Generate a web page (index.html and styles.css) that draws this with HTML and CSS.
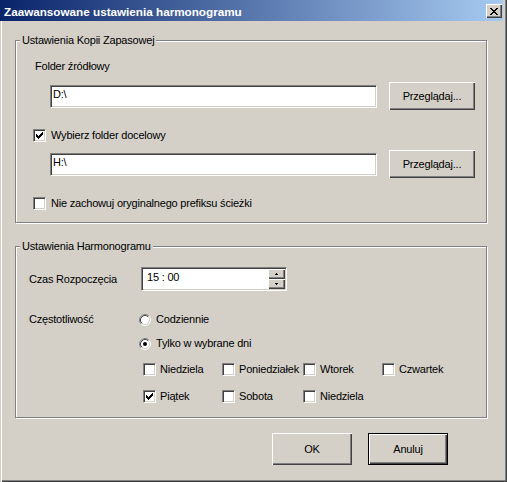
FILE: index.html
```html
<!DOCTYPE html>
<html lang="pl">
<head>
<meta charset="utf-8">
<title>Zaawansowane ustawienia harmonogramu</title>
<link rel="stylesheet" href="styles.css">
</head>
<body>
<div class="window">
  <div class="titlebar">
    <span class="title">Zaawansowane ustawienia harmonogramu</span>
    <span class="close-btn"><svg width="8" height="7" viewBox="0 0 8 7"><path d="M0 0h2v1H0z M6 0h2v1H6z M1 1h2v1H1z M5 1h2v1H5z M2 2h4v1H2z M3 3h2v1H3z M2 4h4v1H2z M1 5h2v1H1z M5 5h2v1H5z M0 6h2v1H0z M6 6h2v1H6z" fill="#000"/></svg></span>
  </div>
  <div class="content">
    <div class="group g1">
      <div class="group-title">Ustawienia Kopii Zapasowej</div>
      <div class="label-row">Folder źródłowy</div>
      <div class="field-row">
        <div class="textbox">D:\</div>
        <div class="btn browse">Przeglądaj...</div>
      </div>
      <div class="check-row">
        <span class="checkbox"><svg width="7" height="7" viewBox="0 0 7 7"><path d="M0 2h1v3H0z M1 3h1v3H1z M2 4h1v3H2z M3 3h1v3H3z M4 2h1v3H4z M5 1h1v3H5z M6 0h1v3H6z" fill="#000"/></svg></span>
        <span class="check-label">Wybierz folder docelowy</span>
      </div>
      <div class="field-row second">
        <div class="textbox">H:\</div>
        <div class="btn browse">Przeglądaj...</div>
      </div>
      <div class="check-row">
        <span class="checkbox"></span>
        <span class="check-label">Nie zachowuj oryginalnego prefiksu ścieżki</span>
      </div>
    </div>

    <div class="group g2">
      <div class="group-title">Ustawienia Harmonogramu</div>
      <div class="sched-row">
        <span class="field-label">Czas Rozpoczęcia</span>
        <div class="spinner">
          <span class="spin-text">15 : 00</span>
          <span class="spin-btns">
            <span class="spin-btn"><svg width="3" height="2" viewBox="0 0 3 2"><path d="M1 0h1v1H1z M0 1h3v1H0z" fill="#000"/></svg></span>
            <span class="spin-btn"><svg width="3" height="2" viewBox="0 0 3 2"><path d="M0 0h3v1H0z M1 1h1v1H1z" fill="#000"/></svg></span>
          </span>
        </div>
      </div>
      <div class="freq">
        <span class="field-label">Częstotliwość</span>
        <div class="options">
          <div class="radio-row">
            <svg class="radio" width="12" height="12" viewBox="0 0 12 12"><circle cx="6" cy="6" r="5" fill="#fff"/><path d="M2.11 9.89A5.5 5.5 0 0 1 9.89 2.11" fill="none" stroke="#808080"/><path d="M9.89 2.11A5.5 5.5 0 0 1 2.11 9.89" fill="none" stroke="#fff"/><path d="M2.82 9.18A4.5 4.5 0 0 1 9.18 2.82" fill="none" stroke="#404040"/><path d="M9.18 2.82A4.5 4.5 0 0 1 2.82 9.18" fill="none" stroke="#d4d0c8"/></svg>
            <span class="radio-label">Codziennie</span>
          </div>
          <div class="radio-row r2">
            <svg class="radio" width="12" height="12" viewBox="0 0 12 12"><circle cx="6" cy="6" r="5" fill="#fff"/><path d="M2.11 9.89A5.5 5.5 0 0 1 9.89 2.11" fill="none" stroke="#808080"/><path d="M9.89 2.11A5.5 5.5 0 0 1 2.11 9.89" fill="none" stroke="#fff"/><path d="M2.82 9.18A4.5 4.5 0 0 1 9.18 2.82" fill="none" stroke="#404040"/><path d="M9.18 2.82A4.5 4.5 0 0 1 2.82 9.18" fill="none" stroke="#d4d0c8"/><circle cx="6" cy="6" r="2" fill="#000"/></svg>
            <span class="radio-label">Tylko w wybrane dni</span>
          </div>
          <div class="days">
            <div class="day"><span class="checkbox"></span><span class="day-label">Niedziela</span></div>
            <div class="day"><span class="checkbox"></span><span class="day-label">Poniedziałek</span></div>
            <div class="day"><span class="checkbox"></span><span class="day-label">Wtorek</span></div>
            <div class="day"><span class="checkbox"></span><span class="day-label">Czwartek</span></div>
            <div class="day"><span class="checkbox"><svg width="7" height="7" viewBox="0 0 7 7"><path d="M0 2h1v3H0z M1 3h1v3H1z M2 4h1v3H2z M3 3h1v3H3z M4 2h1v3H4z M5 1h1v3H5z M6 0h1v3H6z" fill="#000"/></svg></span><span class="day-label">Piątek</span></div>
            <div class="day"><span class="checkbox"></span><span class="day-label">Sobota</span></div>
            <div class="day"><span class="checkbox"></span><span class="day-label">Niedziela</span></div>
          </div>
        </div>
      </div>
    </div>

    <div class="buttons">
      <div class="btn dlg">OK</div>
      <div class="btn dlg default">Anuluj</div>
    </div>
  </div>
</div>
</body>
</html>
```

FILE: styles.css
```css
* {
  box-sizing: border-box;
}

html,
body {
  margin: 0;
  padding: 0;
}

body {
  width: 507px;
  height: 482px;
  overflow: hidden;
  background: #d4d0c8;
  font-family: "Liberation Sans", Arial, sans-serif;
  font-size: 11px;
  letter-spacing: -0.2px;
  color: #000;
}

.window {
  width: 507px;
  height: 482px;
  background: #d4d0c8;
  box-shadow: inset 1px 0 0 #d4d0c8, inset 2px 0 0 #fff, inset -1px -1px 0 #404040, inset -2px -2px 0 #808080;
  display: flex;
  flex-direction: column;
}

/* Title bar */
.titlebar {
  width: 503px;
  height: 21px;
  flex: none;
  background: linear-gradient(to right, #0a246a, #a6caf0);
  display: flex;
  align-items: flex-start;
  justify-content: space-between;
  padding: 0 1px 0 4px;
}

.title {
  color: #fff;
  font-weight: bold;
  font-size: 11.7px;
  letter-spacing: 0;
  line-height: 18px;
  padding-top: 3px;
  white-space: nowrap;
}

.close-btn {
  margin-top: 4px;
  width: 16px;
  height: 14px;
  background: #d4d0c8;
  box-shadow: inset 1px 1px 0 #fff, inset -1px -1px 0 #404040, inset -2px -2px 0 #808080;
  display: flex;
  align-items: center;
  justify-content: center;
}

.close-btn svg {
  display: block;
}

/* Content */
.content {
  width: 487px;
  padding: 19px 0 0 15px;
}

.group {
  position: relative;
  width: 472px;
  border: 1px solid #808080;
  box-shadow: inset 1px 1px 0 #fff, 1px 1px 0 #fff;
}

.group-title {
  position: absolute;
  top: -8px;
  left: 4px;
  padding: 0 2px;
  background: #d4d0c8;
  line-height: 14px;
  white-space: nowrap;
}

.g1 {
  padding: 18px 0 12px 17px;
}

.label-row {
  margin-left: 2px;
  height: 14px;
  line-height: 14px;
}

.field-row {
  display: flex;
  align-items: center;
  height: 28px;
  margin-top: 9px;
}

.field-row.second {
  margin-top: 8px;
}

.textbox {
  margin-left: 17px;
  width: 327px;
  height: 23px;
  background: #fff;
  border: 1px solid;
  border-color: #808080 #fff #fff #808080;
  box-shadow: inset 1px 1px 0 #404040, inset -1px -1px 0 #d4d0c8;
  padding: 0 2px;
  line-height: 17px;
}

.btn {
  background: #d4d0c8;
  box-shadow: inset 1px 1px 0 #fff, inset -1px -1px 0 #404040, inset -2px -2px 0 #808080;
  display: flex;
  align-items: center;
  justify-content: center;
  white-space: nowrap;
}

.browse {
  margin-left: 12px;
  width: 86px;
  height: 28px;
}

.check-row {
  display: flex;
  align-items: center;
  height: 14px;
  margin-top: 18px;
}

.checkbox {
  flex: none;
  display: block;
  width: 13px;
  height: 13px;
  background: #fff;
  border: 1px solid;
  border-color: #808080 #fff #fff #808080;
  box-shadow: inset 1px 1px 0 #404040, inset -1px -1px 0 #d4d0c8;
  padding: 2px 0 0 2px;
}

.checkbox svg {
  display: block;
}

.check-label {
  margin-left: 5px;
  white-space: nowrap;
}

/* Schedule group */
.g2 {
  margin-top: 23px;
  padding: 20px 0 14px 13px;
}

.sched-row {
  display: flex;
  align-items: center;
  height: 24px;
}

.field-label {
  flex: none;
  width: 110px;
  white-space: nowrap;
}

.spinner {
  margin-left: 2px;
  width: 146px;
  height: 24px;
  display: flex;
  background: #fff;
  border: 1px solid;
  border-color: #808080 #fff #fff #808080;
  box-shadow: inset 1px 1px 0 #404040, inset -1px -1px 0 #d4d0c8;
  padding: 1px;
}

.spin-text {
  flex: 1;
  padding-left: 4px;
  line-height: 17px;
}

.spin-btns {
  width: 17px;
  display: flex;
  flex-direction: column;
}

.spin-btn {
  height: 10px;
  background: #d4d0c8;
  box-shadow: inset 1px 1px 0 #fff, inset -1px -1px 0 #404040, inset -2px -2px 0 #808080;
  display: flex;
  align-items: center;
  justify-content: center;
}

.spin-btn svg {
  display: block;
}

.freq {
  display: flex;
  margin-top: 22px;
}

.freq .field-label {
  line-height: 13px;
}

.options {
  display: flex;
  flex-direction: column;
}

.radio-row {
  display: flex;
  align-items: center;
  height: 13px;
  line-height: 13px;
}

.radio-row.r2 {
  margin-top: 11px;
}

.radio {
  display: block;
  flex: none;
}

.radio-label {
  margin-left: 5px;
  white-space: nowrap;
}

.days {
  display: grid;
  grid-template-columns: 79px 81px 79px 80px;
  row-gap: 14px;
  margin: 13px 0 0 4px;
}

.day {
  display: flex;
  align-items: center;
  height: 13px;
  line-height: 13px;
  white-space: nowrap;
}

.day-label {
  margin-left: 4px;
}

/* Dialog buttons */
.buttons {
  display: flex;
  justify-content: flex-end;
  gap: 16px;
  margin-top: 15px;
  padding-right: 39px;
}

.dlg {
  width: 80px;
  height: 32px;
}

.dlg.default {
  border: 1px solid #000;
}
```
